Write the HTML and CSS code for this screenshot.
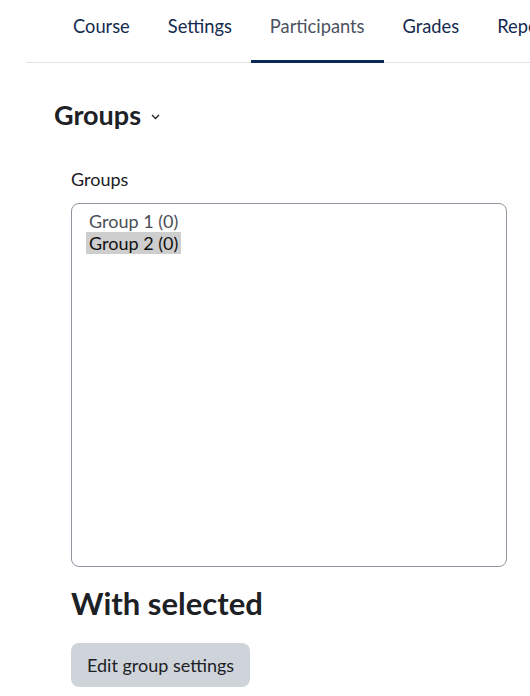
FILE: index.html
```html
<!DOCTYPE html>
<html lang="en">
<head>
<meta charset="utf-8">
<title>Groups</title>
<link rel="stylesheet" href="styles.css">
</head>
<body>
<div class="page">
  <nav class="secnav">
    <ul class="tabs">
      <li class="tab">Course</li>
      <li class="tab">Settings</li>
      <li class="tab active">Participants</li>
      <li class="tab">Grades</li>
      <li class="tab">Reports</li>
    </ul>
  </nav>
  <main class="content">
    <h2 class="title">Groups <svg class="chev" width="9" height="6" viewBox="0 0 9 6"><path d="M1 1 L4.5 4.5 L8 1" fill="none" stroke="#1d2125" stroke-width="1.3"/></svg></h2>
    <div class="field">
      <label class="label">Groups</label>
      <div class="listbox" role="listbox">
        <div class="opt">Group 1 (0)</div>
        <div class="opt selected">Group 2 (0)</div>
      </div>
    </div>
    <h3 class="subtitle">With selected</h3>
    <button class="btn">Edit group settings</button>
  </main>
</div>
</body>
</html>
```
FILE: styles.css
```css
html, body {
  margin: 0;
  padding: 0;
  background: #fff;
  overflow: hidden;
}
body {
  font-family: Lato, "Noto Sans", sans-serif;
  color: #1d2125;
}
.page {
  width: 530px;
  overflow: hidden;
}
.secnav {
  margin-left: 26px;
  border-bottom: 1px solid #dee2e6;
  height: 62px;
}
.tabs {
  list-style: none;
  margin: 0;
  padding: 0 0 0 28px;
  display: flex;
  white-space: nowrap;
  height: 62px;
}
.tab {
  font-size: 18.3px;
  color: #152a50;
  padding: 0 19px;
  height: 62px;
  line-height: 52px;
  box-sizing: border-box;
  border-bottom: 3px solid transparent;
  flex: none;
}
.tab.active {
  color: #4b5260;
  border-bottom-color: #0b2b57;
  height: 63px;
}
.content {
  padding: 0 0 0 54px;
}
.title {
  margin: 35px 0 0 0;
  font-size: 27px;
  font-weight: 700;
  line-height: 34px;
  display: flex;
  align-items: center;
  gap: 10px;
}
.chev {
  margin-top: 3px;
}
.field {
  margin: 0 0 0 17px;
  width: 436px;
}
.label {
  display: block;
  font-size: 18px;
  line-height: 22px;
  margin-top: 36px;
}
.listbox {
  margin-top: 13px;
  height: 347px;
  border: 1px solid #8f959e;
  border-radius: 8px;
  padding: 6px 14px 9px 17px;
  width: 403px;
  font-size: 18px;
  color: #4a4f57;
}
.opt {
  display: table;
  padding: 0 3px;
  margin-left: -3px;
  line-height: 22px;
  height: 22px;
}
.opt.selected {
  background: #cecece;
  color: #111;
}
.subtitle {
  margin: 17px 0 0 17px;
  font-size: 31px;
  font-weight: 700;
  line-height: 38px;
}
.btn {
  margin: 21px 0 0 17px;
  font-family: inherit;
  font-size: 18px;
  color: #1d2125;
  background: #ced4da;
  border: 0;
  border-radius: 8px;
  height: 44px;
  padding: 0 16px;
}
```
